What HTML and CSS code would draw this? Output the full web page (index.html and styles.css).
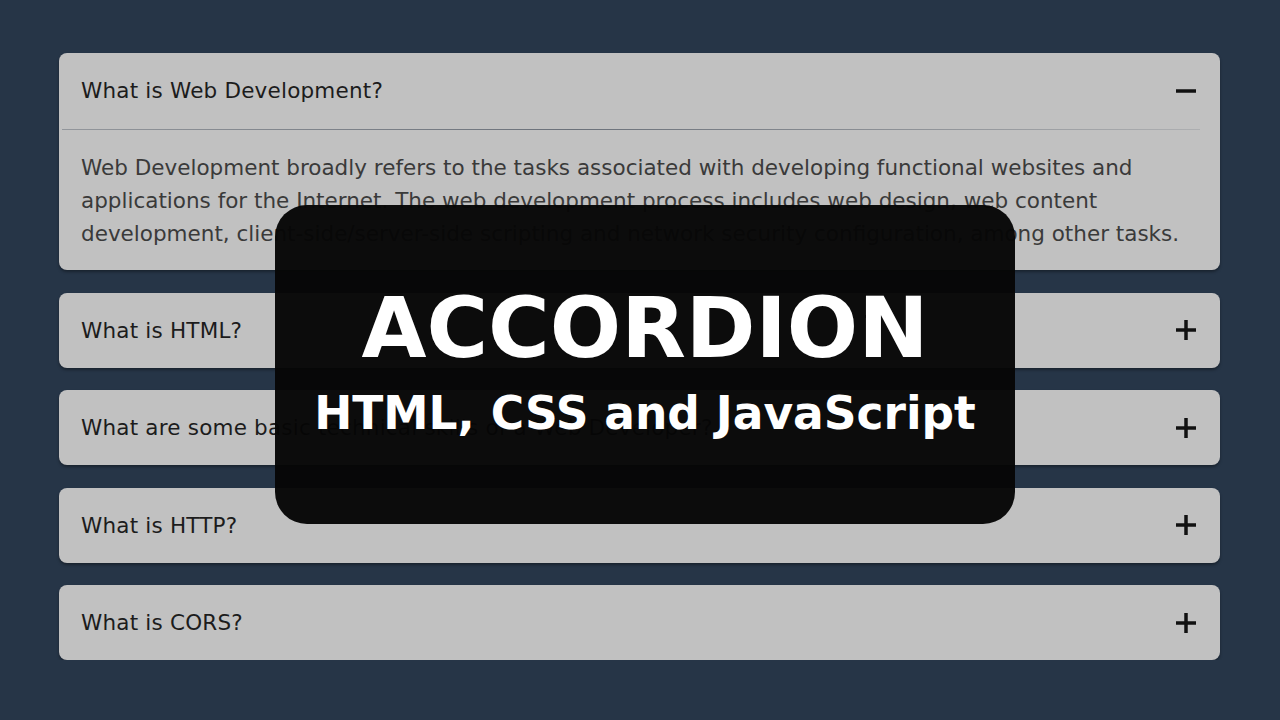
FILE: index.html
```html
<!DOCTYPE html>
<html lang="en">
<head>
    <meta charset="UTF-8">
    <meta name="viewport" content="width=device-width, initial-scale=1.0">
    <title>Accordion</title>
    <link rel="stylesheet" href="styles.css">
</head>
<body>
    <main class="accordion">
        <div class="item open">
            <div class="item-header">
                <span class="question">What is Web Development?</span>
                <svg class="toggle" viewBox="0 0 20 20" width="20" height="20">
                    <path class="bar-h" d="M0 10h20"/>
                    <path class="bar-v" d="M10 0v20"/>
                </svg>
            </div>
            <div class="item-body">
                <p>Web Development broadly refers to the tasks associated with developing functional websites and applications for the Internet. The web development process includes web design, web content development, client-side/server-side scripting and network security configuration, among other tasks.</p>
            </div>
        </div>

        <div class="item">
            <div class="item-header">
                <span class="question">What is HTML?</span>
                <svg class="toggle" viewBox="0 0 20 20" width="20" height="20">
                    <path class="bar-h" d="M0 10h20"/>
                    <path class="bar-v" d="M10 0v20"/>
                </svg>
            </div>
            <div class="item-body">
                <p>HTML is the standard markup language for documents designed to be displayed in a web browser.</p>
            </div>
        </div>

        <div class="item">
            <div class="item-header">
                <span class="question">What are some basic technical skills of a Web Developer?</span>
                <svg class="toggle" viewBox="0 0 20 20" width="20" height="20">
                    <path class="bar-h" d="M0 10h20"/>
                    <path class="bar-v" d="M10 0v20"/>
                </svg>
            </div>
            <div class="item-body">
                <p>HTML, CSS, JavaScript, version control with Git, responsive design and a basic understanding of HTTP.</p>
            </div>
        </div>

        <div class="item">
            <div class="item-header">
                <span class="question">What is HTTP?</span>
                <svg class="toggle" viewBox="0 0 20 20" width="20" height="20">
                    <path class="bar-h" d="M0 10h20"/>
                    <path class="bar-v" d="M10 0v20"/>
                </svg>
            </div>
            <div class="item-body">
                <p>HTTP is the protocol used to transfer data between a web browser and a web server.</p>
            </div>
        </div>

        <div class="item">
            <div class="item-header">
                <span class="question">What is CORS?</span>
                <svg class="toggle" viewBox="0 0 20 20" width="20" height="20">
                    <path class="bar-h" d="M0 10h20"/>
                    <path class="bar-v" d="M10 0v20"/>
                </svg>
            </div>
            <div class="item-body">
                <p>Cross-Origin Resource Sharing lets a server say which other origins may load its resources.</p>
            </div>
        </div>
    </main>

    <div class="banner">
        <div class="banner-title">ACCORDION</div>
        <div class="banner-sub">HTML, CSS and JavaScript</div>
    </div>

    <script>
        document.querySelectorAll('.item-header').forEach(header => {
            header.addEventListener('click', function() {
                this.parentElement.classList.toggle('open');
            });
        });
    </script>
</body>
</html>
```

FILE: styles.css
```css
body {
    margin: 0;
    background: #263547;
    font-family: 'DejaVu Sans', 'Open Sans', sans-serif;
}

.accordion {
    display: flex;
    flex-direction: column;
    gap: 22.5px;
    padding: 53px 60px 0 59px;
}

.item {
    background: #c1c1c1;
    border-radius: 8px;
    box-shadow: 0 2px 3px rgba(0, 0, 0, 0.35);
}

.item-header {
    height: 75px;
    display: flex;
    align-items: center;
    justify-content: space-between;
    padding: 0 24px 0 22px;
    cursor: pointer;
}

.question {
    font-size: 21.5px;
    letter-spacing: 0.2px;
    color: #1c1c1c;
}

.toggle path {
    stroke: #111;
    stroke-width: 3.5;
}

.item.open .bar-v {
    display: none;
}

.item-body {
    display: none;
    padding: 0 22px 20px 22px;
}

.item.open .item-body {
    display: block;
}

/* thin fading divider under the open header */
.item-body::before {
    content: '';
    display: block;
    height: 1px;
    margin: 1px -2px 0 -19px;
    background: linear-gradient(to right, rgba(60, 70, 85, 0.35), #6b717a 45%, rgba(60, 70, 85, 0.15));
}

.item-body p {
    margin: 21px 0 0 0;
    font-size: 21.5px;
    line-height: 33px;
    color: #3a3a3a;
}

.banner {
    position: absolute;
    left: 275px;
    top: 205px;
    width: 740px;
    height: 319px;
    border-radius: 32px;
    background: rgba(6, 6, 6, 0.97);
    color: #fff;
    display: flex;
    flex-direction: column;
    align-items: center;
    justify-content: center;
    font-weight: bold;
}

.banner-title {
    font-size: 84px;
    line-height: 1;
    margin-top: -6px;
}

.banner-sub {
    font-size: 45.5px;
    line-height: 1;
    margin-top: 21px;
}
```
